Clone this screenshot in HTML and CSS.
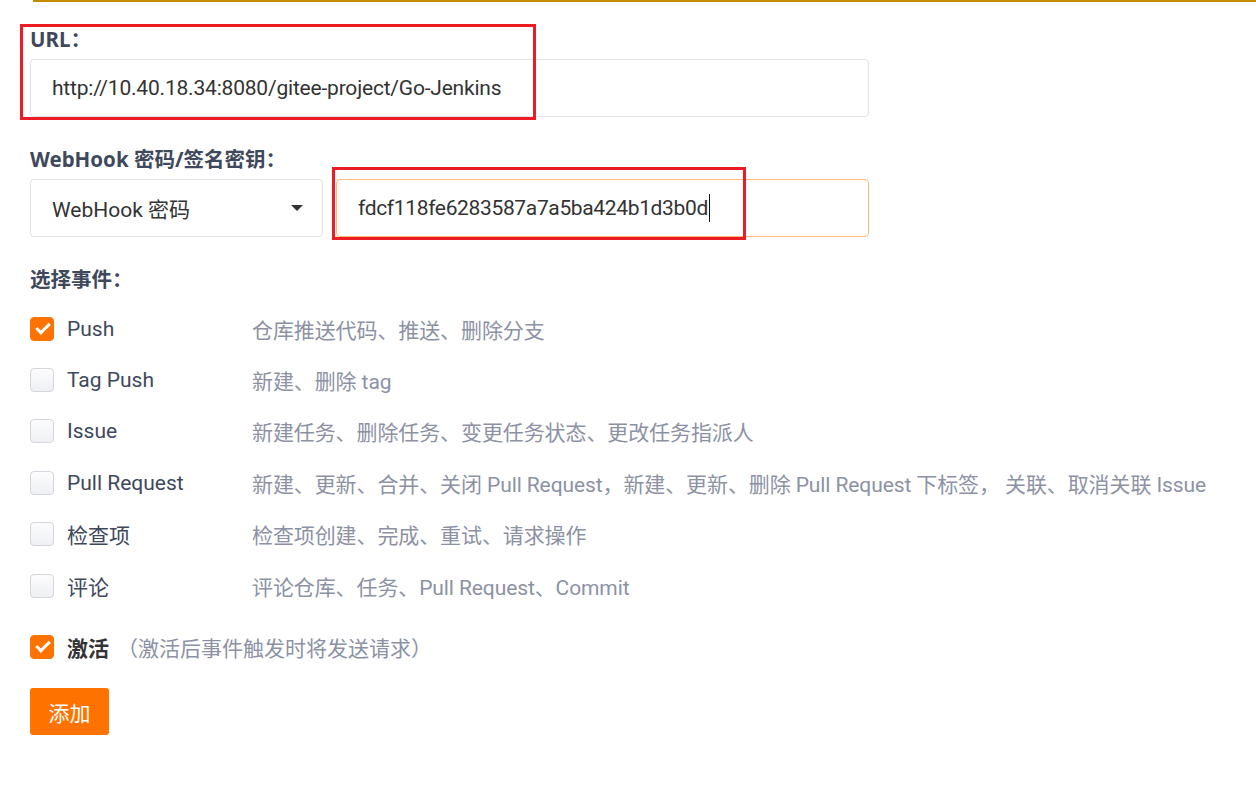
FILE: index.html
```html
<!DOCTYPE html>
<html lang="zh-CN">
<head>
<meta charset="utf-8">
<title>WebHook</title>
<link rel="stylesheet" href="styles.css">
</head>
<body>
<div class="topline"></div>
<form class="form">
  <div class="field">
    <div class="label">URL：</div>
    <div class="input">http://10.40.18.34:8080/gitee-project/Go-Jenkins</div>
  </div>
  <div class="field">
    <div class="label">WebHook 密码/签名密钥：</div>
    <div class="pair">
      <div class="select"><span>WebHook 密码</span><span class="caret"></span></div>
      <div class="input secret"><span>fdcf118fe6283587a7a5ba424b1d3b0d</span><span class="cursor"></span></div>
    </div>
  </div>
  <div class="field events">
    <div class="label">选择事件：</div>
    <div class="event"><span class="box checked"></span><span class="name">Push</span><span class="desc">仓库推送代码、推送、删除分支</span></div>
    <div class="event"><span class="box"></span><span class="name">Tag Push</span><span class="desc">新建、删除 tag</span></div>
    <div class="event"><span class="box"></span><span class="name">Issue</span><span class="desc">新建任务、删除任务、变更任务状态、更改任务指派人</span></div>
    <div class="event"><span class="box"></span><span class="name">Pull Request</span><span class="desc">新建、更新、合并、关闭 Pull Request，新建、更新、删除 Pull Request 下标签， 关联、取消关联 Issue</span></div>
    <div class="event"><span class="box"></span><span class="name">检查项</span><span class="desc">检查项创建、完成、重试、请求操作</span></div>
    <div class="event"><span class="box"></span><span class="name">评论</span><span class="desc">评论仓库、任务、Pull Request、Commit</span></div>
  </div>
  <div class="active"><span class="box checked"></span><span class="active-name">激活</span><span class="hint">（激活后事件触发时将发送请求）</span></div>
  <button type="button" class="btn">添加</button>
  <div class="mark mark-url"></div>
  <div class="mark mark-secret"></div>
</form>
</body>
</html>
```
FILE: styles.css
```css
html, body {
  margin: 0;
  padding: 0;
  background: #fff;
}
body {
  font-family: Roboto, "Noto Sans CJK SC", sans-serif;
  font-size: 21px;
  color: #333;
}
.topline {
  margin-left: 33px;
  height: 2px;
  background: #c48b00;
}
.form {
  position: relative;
  margin: 0;
  padding: 25px 0 0 30px;
}
.field {
  margin-bottom: 30px;
}
.label {
  font-family: "Noto Sans", "Noto Sans CJK SC", sans-serif;
  font-size: 20.5px;
  line-height: 24px;
  font-weight: 700;
  color: #40485b;
  margin-bottom: 8px;
}
.input {
  box-sizing: border-box;
  width: 839px;
  height: 58px;
  border: 1px solid #e0e2e7;
  border-radius: 4px;
  padding: 0 21px;
  display: flex;
  align-items: center;
  color: #333;
  line-height: 1;
  letter-spacing: -0.2px;
}
.pair {
  display: flex;
  gap: 13px;
}
.select {
  box-sizing: border-box;
  width: 293px;
  height: 58px;
  border: 1px solid #e0e2e7;
  border-radius: 4px;
  padding: 0 19px 0 21px;
  display: flex;
  align-items: center;
  justify-content: space-between;
  color: #333;
}
.caret {
  width: 0;
  height: 0;
  border-left: 6px solid transparent;
  border-right: 6px solid transparent;
  border-top: 6px solid #333;
}
.input.secret {
  width: 533px;
  border-color: #ffb877;
  letter-spacing: -0.35px;
}
.cursor {
  display: inline-block;
  width: 1px;
  height: 28px;
  background: #111;
  margin-left: 1px;
}
.events {
  margin-bottom: 14px;
}
.events .label {
  margin-bottom: 12px;
}
.event {
  display: flex;
  align-items: center;
  height: 51.4px;
}
.box {
  box-sizing: border-box;
  width: 24px;
  height: 24px;
  border: 1px solid #d4d6db;
  border-radius: 4px;
  background: linear-gradient(#fcfcfd, #eef0f3);
  flex: none;
  position: relative;
}
.box.checked {
  border-color: #fe7300;
  background: #fe7300;
}
.box.checked::after {
  content: "";
  position: absolute;
  left: 5px;
  top: 5px;
  width: 11px;
  height: 5px;
  border-left: 3px solid #fff;
  border-bottom: 3px solid #fff;
  transform: rotate(-45deg);
}
.name {
  width: 185px;
  margin-left: 13px;
  color: #40485b;
}
.desc {
  color: #8c92a4;
  letter-spacing: -0.1px;
}
.active {
  display: flex;
  align-items: center;
  height: 44px;
  margin-bottom: 19px;
}
.active-name {
  margin-left: 13px;
  font-weight: 700;
  color: #333;
}
.hint {
  color: #8c92a4;
  margin-left: 8px;
}
.btn {
  display: block;
  width: 79px;
  height: 47px;
  border: none;
  border-radius: 3px;
  background: #fe7300;
  color: #fff;
  font-family: Roboto, "Noto Sans CJK SC", sans-serif;
  font-size: 21px;
  padding: 0;
}
.mark {
  position: absolute;
  border: 3px solid #ed1c24;
  pointer-events: none;
}
.mark-url {
  left: 20px;
  top: 22px;
  width: 510px;
  height: 90px;
}
.mark-secret {
  left: 332px;
  top: 165px;
  width: 408px;
  height: 67px;
}
```
